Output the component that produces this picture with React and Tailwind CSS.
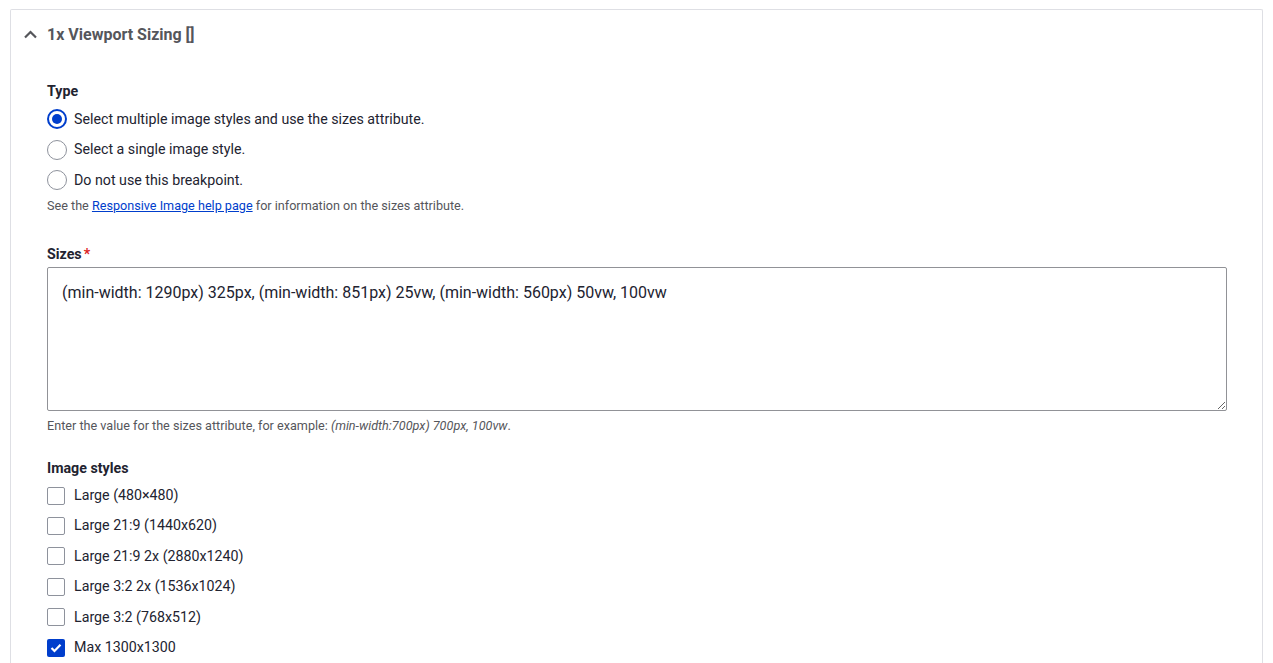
import { useState } from "react";

const imageStyles = [
  { label: "Large (480×480)", checked: false },
  { label: "Large 21:9 (1440x620)", checked: false },
  { label: "Large 21:9 2x (2880x1240)", checked: false },
  { label: "Large 3:2 2x (1536x1024)", checked: false },
  { label: "Large 3:2 (768x512)", checked: false },
  { label: "Max 1300x1300", checked: true },
];

const types = [
  "Select multiple image styles and use the sizes attribute.",
  "Select a single image style.",
  "Do not use this breakpoint.",
];

export default function App() {
  const [type, setType] = useState(0);
  const [styles, setStyles] = useState(imageStyles.map((s) => s.checked));

  return (
    <div className="bg-white h-[663px] pt-[9px] px-[10px] font-['Roboto',sans-serif] text-[#222330] overflow-hidden">
      <div className="border border-[#dedfe4] border-b-0 rounded-t-[2px]">
        {/* Header */}
        <div className="flex items-center h-[49px] pl-[13px]">
          <svg width="13" height="9" viewBox="0 0 13 9" className="mr-[10px]">
            <path d="M1 7.5 L6.5 2 L12 7.5" fill="none" stroke="#55565b" strokeWidth="2.2" />
          </svg>
          <span className="text-[16px] font-bold text-[#55565b]">1x Viewport Sizing []</span>
        </div>

        <div className="pl-[36px] pr-[35px] pt-[23px]">
          {/* Type */}
          <div className="text-[14.22px] font-bold leading-[18px] mb-[4px]">Type</div>
          {types.map((t, i) => (
            <label key={t} className="flex items-center h-[30.5px] cursor-pointer" onClick={() => setType(i)}>
              {type === i ? (
                <span className="w-[20px] h-[20px] rounded-full border-[2px] border-[#003ecc] flex items-center justify-center">
                  <span className="w-[10px] h-[10px] rounded-full bg-[#003ecc]" />
                </span>
              ) : (
                <span className="w-[20px] h-[20px] rounded-full border border-[#8e929c]" />
              )}
              <span className="ml-[7px] text-[14.22px]">{t}</span>
            </label>
          ))}
          <div className="text-[12.64px] text-[#55565b] mt-[2px] leading-[16px]">
            See the <a href="#" className="text-[#003ecc] underline">Responsive Image help page</a> for information on the sizes attribute.
          </div>

          {/* Sizes */}
          <div className="mt-[31px] text-[14.22px] font-bold leading-[18px] flex">
            Sizes<span className="text-[#dc2323] ml-[2px]">*</span>
          </div>
          <textarea
            className="block mt-[4px] w-full h-[144px] border border-[#919297] rounded-[2px] px-[14px] py-[14px] text-[16px] leading-[22px] text-[#222330] outline-none resize-y"
            defaultValue="(min-width: 1290px) 325px, (min-width: 851px) 25vw, (min-width: 560px) 50vw, 100vw"
          />
          <div className="text-[12.64px] text-[#55565b] mt-[7px] leading-[16px]">
            Enter the value for the sizes attribute, for example: <em>(min-width:700px) 700px, 100vw</em>.
          </div>

          {/* Image styles */}
          <div className="mt-[25px] text-[14.22px] font-bold leading-[18px] mb-[4px]">Image styles</div>
          {imageStyles.map((s, i) => (
            <label
              key={s.label}
              className="flex items-center h-[30.4px] cursor-pointer"
              onClick={() => setStyles(styles.map((v, j) => (j === i ? !v : v)))}
            >
              {styles[i] ? (
                <span className="w-[18px] h-[18px] rounded-[2px] bg-[#003ecc] flex items-center justify-center">
                  <svg width="12" height="10" viewBox="0 0 12 10">
                    <path d="M1.5 5 L4.5 8 L10.5 1.8" fill="none" stroke="white" strokeWidth="2.2" />
                  </svg>
                </span>
              ) : (
                <span className="w-[18px] h-[18px] rounded-[2px] border border-[#8e929c]" />
              )}
              <span className="ml-[9px] text-[14.22px]">{s.label}</span>
            </label>
          ))}
        </div>
      </div>
    </div>
  );
}
